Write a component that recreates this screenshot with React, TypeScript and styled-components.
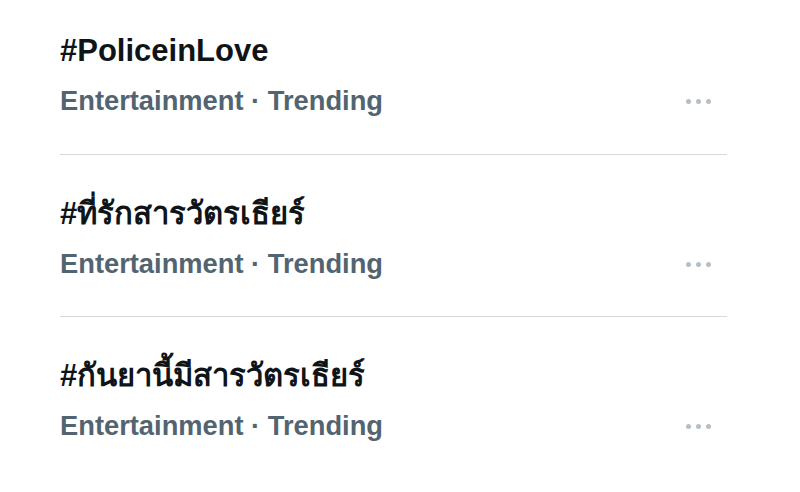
import React from 'react';
import styled, { createGlobalStyle } from 'styled-components';

type Trend = {
    id: number,
    tag: string,
    category: string,
}

const trends: Trend[] = [
    { id: 1, tag: '#PoliceinLove', category: 'Entertainment · Trending' },
    { id: 2, tag: '#ที่รักสารวัตรเธียร์', category: 'Entertainment · Trending' },
    { id: 3, tag: '#กันยานี้มีสารวัตรเธียร์', category: 'Entertainment · Trending' },
]

const GlobalStyle = createGlobalStyle`
  html, body {
    margin: 0;
    padding: 0;
    background: #ffffff;
  }
  body {
    font-family: "Liberation Sans", Arial, "Noto Sans", sans-serif;
  }
`

const List = styled.div`
  width: 800px;
  height: 492px;
  overflow: hidden;
  padding: 0 73px 0 60px;
  box-sizing: border-box;
  margin-top: -8px;
`

const Row = styled.div<{ $first?: boolean }>`
  display: flex;
  justify-content: space-between;
  height: 162px;
  box-sizing: border-box;
  padding: 38px 16px 0 0;
  border-top: ${p => (p.$first ? 'none' : '1px solid #d4d9dd')};
`

const TextCol = styled.div`
  display: flex;
  flex-direction: column;
  align-self: flex-start;
`

const Tag = styled.div`
  font-size: 31px;
  line-height: 42px;
  font-weight: 700;
  color: #0f1419;
`

const Category = styled.div`
  margin-top: 12px;
  font-size: 27.3px;
  line-height: 34px;
  font-weight: 700;
  color: #536471;
`

const MoreButton = styled.div`
  display: flex;
  gap: 5px;
  align-self: flex-start;
  margin-top: 69px;
`

const Dot = styled.span`
  width: 5px;
  height: 5px;
  border-radius: 50%;
  background: #b7bfc6;
`

export default function App() {
    return (
        <>
            <GlobalStyle />
            <List>
                {trends.map((t, i) => (
                    <Row key={t.id} $first={i === 0}>
                        <TextCol>
                            <Tag>{t.tag}</Tag>
                            <Category>{t.category}</Category>
                        </TextCol>
                        <MoreButton>
                            <Dot />
                            <Dot />
                            <Dot />
                        </MoreButton>
                    </Row>
                ))}
            </List>
        </>
    )
}
